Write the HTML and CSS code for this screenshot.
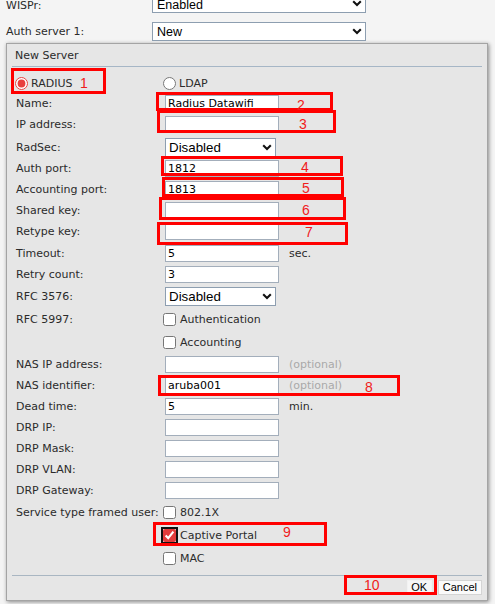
FILE: index.html
```html
<!DOCTYPE html>
<html>
<head>
<meta charset="utf-8">
<link rel="stylesheet" href="styles.css">
</head>
<body>
<div class="page">
  <div class="top">
    <div class="top-row top-first">
      <span class="top-label">WISPr:</span>
      <div class="select select-top">
        <select><option>Enabled</option></select>
        <svg class="chev" width="10" height="7" viewBox="0 0 10 7"><path d="M1.2 1.3 L5 5 L8.8 1.3" fill="none" stroke="#111" stroke-width="2.1"/></svg>
      </div>
    </div>
    <div class="top-row">
      <span class="top-label">Auth server 1:</span>
      <div class="select select-top">
        <select><option>New</option></select>
        <svg class="chev" width="10" height="7" viewBox="0 0 10 7"><path d="M1.2 1.3 L5 5 L8.8 1.3" fill="none" stroke="#111" stroke-width="2.1"/></svg>
      </div>
    </div>
  </div>

  <div class="dialog">
    <div class="dialog-title">New Server</div>
    <div class="radio-row">
      <label class="radio-opt first"><input type="radio" name="type" checked>RADIUS</label>
      <label class="radio-opt"><input type="radio" name="type">LDAP</label>
    </div>

    <div class="form">
      <div class="row"><span class="lbl">Name:</span><input class="txt" value="Radius Datawifi"></div>
      <div class="row"><span class="lbl">IP address:</span><input class="txt" value=""></div>
      <div class="row row-radsec"><span class="lbl">RadSec:</span>
        <div class="select select-in">
          <select><option>Disabled</option></select>
          <svg class="chev" width="10" height="7" viewBox="0 0 10 7"><path d="M1.2 1.3 L5 5 L8.8 1.3" fill="none" stroke="#111" stroke-width="2.1"/></svg>
        </div>
      </div>
      <div class="row"><span class="lbl">Auth port:</span><input class="txt" value="1812"></div>
      <div class="row"><span class="lbl">Accounting port:</span><input class="txt" value="1813"></div>
      <div class="row"><span class="lbl">Shared key:</span><input class="txt" value=""></div>
      <div class="row"><span class="lbl">Retype key:</span><input class="txt" value=""></div>
      <div class="row row-gap"><span class="lbl">Timeout:</span><input class="txt" value="5"><span class="unit">sec.</span></div>
      <div class="row"><span class="lbl">Retry count:</span><input class="txt" value="3"></div>
      <div class="row row-tall"><span class="lbl">RFC 3576:</span>
        <div class="select select-in">
          <select><option>Disabled</option></select>
          <svg class="chev" width="10" height="7" viewBox="0 0 10 7"><path d="M1.2 1.3 L5 5 L8.8 1.3" fill="none" stroke="#111" stroke-width="2.1"/></svg>
        </div>
      </div>
      <div class="row row-tall"><span class="lbl">RFC 5997:</span><label class="cb"><input type="checkbox">Authentication</label></div>
      <div class="row row-tall"><span class="lbl"></span><label class="cb"><input type="checkbox">Accounting</label></div>
      <div class="row"><span class="lbl">NAS IP address:</span><input class="txt" value=""><span class="unit optional">(optional)</span></div>
      <div class="row"><span class="lbl">NAS identifier:</span><input class="txt" value="aruba001"><span class="unit optional">(optional)</span></div>
      <div class="row"><span class="lbl">Dead time:</span><input class="txt" value="5"><span class="unit">min.</span></div>
      <div class="row"><span class="lbl">DRP IP:</span><input class="txt" value=""></div>
      <div class="row"><span class="lbl">DRP Mask:</span><input class="txt" value=""></div>
      <div class="row"><span class="lbl">DRP VLAN:</span><input class="txt" value=""></div>
      <div class="row"><span class="lbl">DRP Gateway:</span><input class="txt" value=""></div>
      <div class="row row-tall"><span class="lbl">Service type framed user:</span><label class="cb"><input type="checkbox">802.1X</label></div>
      <div class="row row-tall"><span class="lbl"></span><label class="cb focused"><input type="checkbox" checked>Captive Portal</label></div>
      <div class="row row-tall"><span class="lbl"></span><label class="cb"><input type="checkbox">MAC</label></div>
    </div>

    <div class="footer">
      <button class="btn btn-ok">OK</button>
      <button class="btn">Cancel</button>
    </div>
  </div>

  <div class="mark mark-1"></div>
  <div class="mark mark-2"></div>
  <div class="mark mark-3"></div>
  <div class="mark mark-4"></div>
  <div class="mark mark-5"></div>
  <div class="mark mark-6"></div>
  <div class="mark mark-7"></div>
  <div class="mark mark-8"></div>
  <div class="mark mark-9"></div>
  <div class="mark mark-10"></div>

  <span class="num num-1">1</span>
  <span class="num num-2">2</span>
  <span class="num num-3">3</span>
  <span class="num num-4">4</span>
  <span class="num num-5">5</span>
  <span class="num num-6">6</span>
  <span class="num num-7">7</span>
  <span class="num num-8">8</span>
  <span class="num num-9">9</span>
  <span class="num num-10">10</span>
</div>
</body>
</html>
```

FILE: styles.css
```css
html, body {
  margin: 0;
  padding: 0;
  background: #f4f4f4;
}

body {
  font-family: "DejaVu Sans", Verdana, sans-serif;
  font-size: 11px;
  color: #2b2b2b;
}

.page {
  position: relative;
  width: 495px;
  height: 604px;
  overflow: hidden;
}

/* top rows */
.top {
  margin-top: -6px;
}

.top-row {
  display: flex;
  align-items: center;
  height: 19px;
  padding-left: 6px;
}

.top-row + .top-row {
  margin-top: 9px;
}

.top-label {
  width: 146px;
  flex: none;
}

.top-first .top-label {
  padding-top: 4px;
}

/* select */
.select {
  display: flex;
  align-items: center;
  height: 19px;
  box-sizing: border-box;
  border: 1px solid #8d9eb0;
  background: #fff;
}

.select select {
  flex: 1;
  min-width: 0;
  height: 100%;
  border: 0;
  margin: 0;
  background: transparent;
  -webkit-appearance: none;
  appearance: none;
  outline: none;
  color: #000;
  font-family: "Liberation Sans", Arial, sans-serif;
}

.select .chev {
  flex: none;
  margin-right: 3px;
}

.select-top {
  width: 214px;
}

.select-top select {
  font-size: 12.5px;
  padding: 0 0 0 4px;
}

.top-first .select select {
  padding-top: 3px;
}

.select-in {
  width: 111px;
  margin-left: 2px;
}

.select-in select {
  font-size: 13.33px;
  padding: 0 0 0 3px;
}

/* dialog */
.dialog {
  margin: 2px 0 0 6px;
  width: 482px;
  box-sizing: border-box;
  border: 1px solid #a4a4a4;
  background: #e6e6e6;
  padding: 0 5px 5px;
  box-shadow: 1px 1px 4px rgba(0, 0, 0, 0.45);
}

.dialog-title {
  height: 22px;
  line-height: 23px;
  padding-left: 3px;
  border-bottom: 1px solid #a6b6c6;
}

.radio-row {
  display: flex;
  align-items: center;
  height: 13px;
  margin: 10px 0 3px;
  padding-left: 3px;
}

.radio-opt {
  display: flex;
  align-items: center;
  gap: 3px;
}

.radio-opt.first {
  width: 148px;
}

.radio-opt input {
  margin: 0;
  width: 13px;
  height: 13px;
  accent-color: #e8403f;
}

/* form rows */
.row {
  display: flex;
  align-items: center;
  height: 21px;
  padding-left: 4px;
}

.row-radsec {
  height: 22px;
  margin-top: 1px;
}

.row-gap {
  margin-top: 1px;
}

.row-tall {
  height: 23px;
}

.lbl {
  width: 147px;
  flex: none;
  white-space: nowrap;
}

.txt {
  margin: 0 0 0 2px;
  width: 114px;
  height: 17px;
  box-sizing: border-box;
  border: 1px solid #a3aebb;
  padding: 0 2px;
  font-family: "DejaVu Sans", Verdana, sans-serif;
  font-size: 11px;
  color: #000;
  background: #fff;
  outline: none;
}

.unit {
  margin-left: 10px;
}

.optional {
  color: #a9a9a9;
}

.cb {
  display: flex;
  align-items: center;
  gap: 4px;
}

.cb input {
  margin: 0;
  width: 13px;
  height: 13px;
  accent-color: #e23c3c;
}

.focused input {
  outline: 2px solid #111;
  outline-offset: 0;
  border-radius: 3px;
}

/* footer */
.footer {
  margin-top: 5px;
  border-top: 1px solid #a9b6c2;
  padding-top: 4px;
  display: flex;
  justify-content: flex-end;
  gap: 6px;
}

.btn {
  height: 15px;
  margin: 0;
  padding: 0 4px;
  box-sizing: border-box;
  border: 1px solid #d4d4d4;
  background: #fafafa;
  color: #000;
  font-family: "Liberation Sans", Arial, sans-serif;
  font-size: 11px;
  line-height: 13px;
}

.btn-ok {
  width: 25px;
  padding: 0;
  border-color: #f2f2f2;
  background: #f6f6f6;
}

/* annotation overlay */
.mark {
  position: absolute;
  box-sizing: border-box;
  border: 3px solid #ff0000;
}

.mark-1 { left: 11px; top: 68px; width: 95px; height: 26px; }
.mark-2 { left: 156px; top: 92px; width: 177px; height: 19px; }
.mark-3 { left: 157px; top: 110px; width: 179px; height: 23px; }
.mark-4 { left: 161px; top: 156px; width: 182px; height: 20px; }
.mark-5 { left: 162px; top: 177px; width: 182px; height: 20px; }
.mark-6 { left: 159px; top: 197px; width: 187px; height: 23px; }
.mark-7 { left: 157px; top: 222px; width: 191px; height: 23px; }
.mark-8 { left: 158px; top: 375px; width: 242px; height: 21px; }
.mark-9 { left: 153px; top: 522px; width: 174px; height: 24px; }
.mark-10 { left: 344px; top: 575px; width: 93px; height: 20px; }

.num {
  position: absolute;
  color: #f01c1c;
  font-family: "Liberation Sans", Arial, sans-serif;
  font-size: 14px;
  line-height: 16px;
}

.num-1 { left: 80px; top: 75px; }
.num-2 { left: 297px; top: 97px; }
.num-3 { left: 299px; top: 116px; }
.num-4 { left: 301px; top: 159px; }
.num-5 { left: 302px; top: 180px; }
.num-6 { left: 302px; top: 202px; }
.num-7 { left: 305px; top: 224px; }
.num-8 { left: 365px; top: 379px; }
.num-9 { left: 283px; top: 524px; }
.num-10 { left: 364px; top: 577px; }
```
